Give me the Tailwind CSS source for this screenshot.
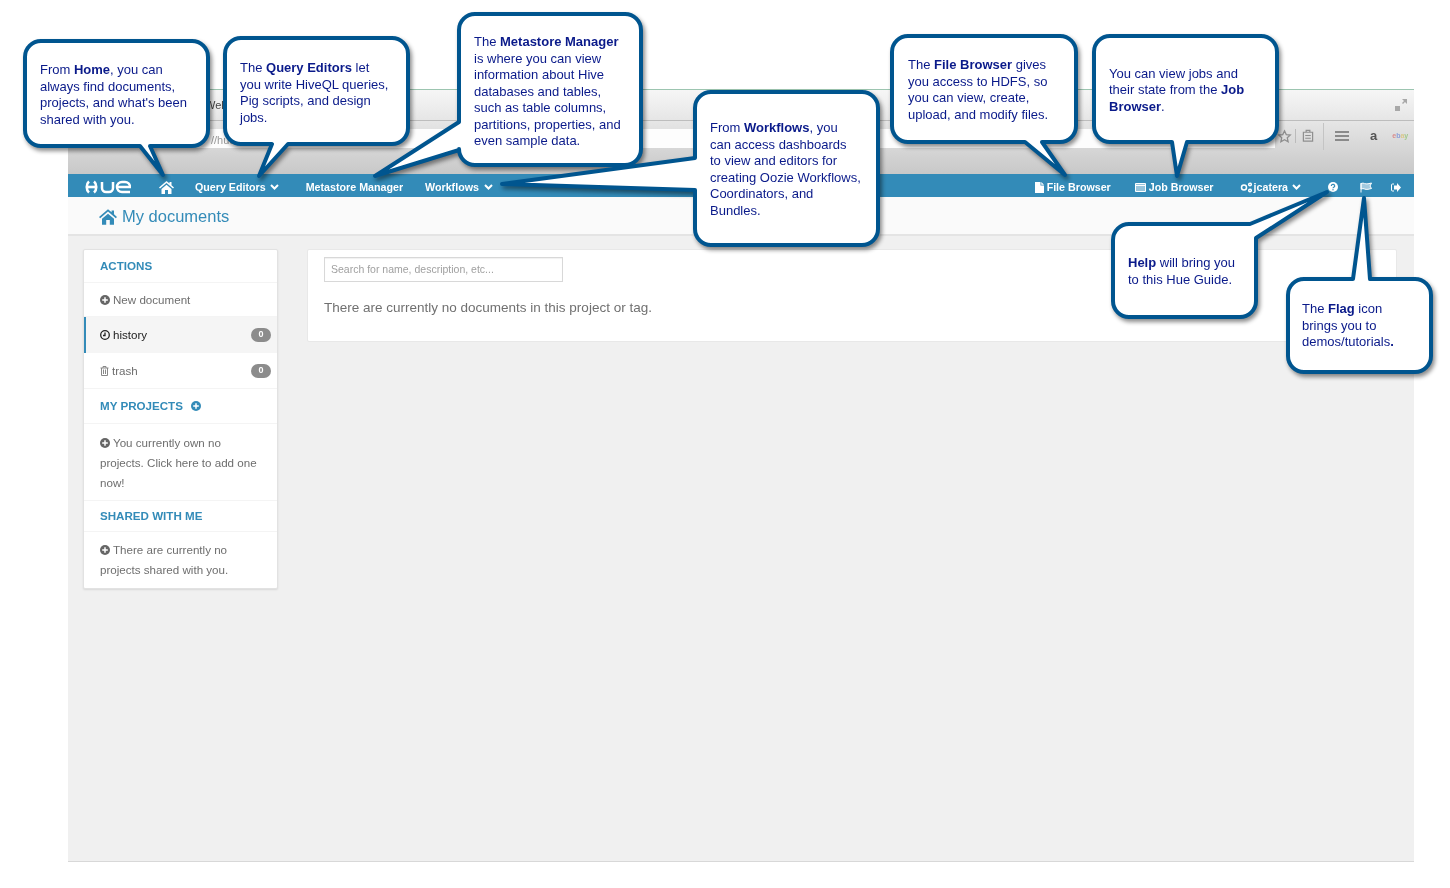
<!DOCTYPE html>
<html lang="en">
<head>
    <meta charset="UTF-8">
    <meta name="viewport" content="width=device-width, initial-scale=1.0">
    <title>Hue - My documents</title>
    <script src="https://cdn.jsdelivr.net/npm/@tailwindcss/browser@4"></script>
</head>
<body class="bg-white font-['Liberation_Sans',Arial,sans-serif] overflow-hidden">
<div class="relative w-[1450px] h-[888px] pt-[89px] pl-[68px]">

    <!-- the Hue window -->
    <div class="w-[1346px] h-[773px] flex flex-col bg-[#f0f0f0] border-b border-[#d8d8d8] blur-[0.5px]">
        <!-- browser chrome behind the callouts -->
        <div class="h-[85px] flex flex-col border-t border-[#9cc5b0]">
            <div class="h-[31px] flex items-center justify-end pr-[6px] bg-gradient-to-b from-[#f6f6f6] to-[#e6e6e6] border-b border-[#bdbdbd]">
                <span class="mr-auto ml-[137px] text-[11px] text-[#444]">Welc</span>
                <svg class="w-[14px] h-[14px] text-[#a8a8a8]" viewBox="0 0 14 14" fill="currentColor"><path d="M8 1h5v5l-2-2-2 2-1-1 2-2zM1 8h5v5H1z"/></svg>
            </div>
            <div class="flex-1 flex items-start pt-[8px] bg-gradient-to-b from-[#e6e6e6] to-[#c8c8c8] text-[#8f8f8f]">
                <div class="ml-[62px] w-[1145px] h-[19px] bg-[#fdfdfd] flex items-center pt-[3px] pl-[81px] text-[11px] text-[#999]">//hue</div>
                <svg class="ml-[2px] w-[15px] h-[15px]" viewBox="0 0 24 24" fill="none" stroke="currentColor" stroke-width="2"><path d="M12 3l2.800 6 6.400.7-4.800 4.300 1.400 6.500L12 17l-5.800 3.500L7.600 14 2.800 9.700 9.200 9z"/></svg>
                <div class="ml-[3px] w-px h-[14px] bg-[#bbb]"></div>
                <svg class="ml-[6px] w-[12px] h-[13px]" viewBox="0 0 13 14" fill="none" stroke="currentColor" stroke-width="1.300"><path d="M1.500 3.500h10v9.500h-10zM4.500 3.500V1.500h4v2M3.500 7h6M3.500 10h6"/></svg>
                <div class="ml-[9px] w-px h-[27px] -mt-[6px] bg-[#c4c4c4]"></div>
                <div class="ml-[11px] mt-[2px] w-[14px] flex flex-col gap-[2px]"><div class="h-[2px] bg-[#8a8a8a]"></div><div class="h-[2px] bg-[#8a8a8a]"></div><div class="h-[2px] bg-[#8a8a8a]"></div></div>
                <span class="ml-[21px] text-[13px] font-bold text-[#555] leading-none">a</span>
                <span class="ml-[15px] mt-[3px] text-[7px] font-bold leading-none"><span class="text-[#d98c8c]">e</span><span class="text-[#8c9fd9]">b</span><span class="text-[#d9c98c]">a</span><span class="text-[#a3c98c]">y</span></span>
            </div>
        </div>

        <!-- navbar -->
        <nav class="h-[23px] pt-[3px] bg-[#338bb8] flex items-center text-white text-[10.700px] font-bold">
            <svg class="ml-[17px] w-[46px] h-[14px]" viewBox="0 0 46 14" fill="none" stroke="white" stroke-width="2.500"><path d="M4 1.500C1 4 1 10 4 12.500M9 1.500c3 2.500 3 8.500 0 11" stroke-width="2.600"/><path d="M2 7h9" stroke-width="2.600"/><path d="M17 2v6a4 4 0 0 0 4 4h3a4 4 0 0 0 4-4V2"/><path d="M45 12h-8a5 5 0 0 1 0-10h3a5 5 0 0 1 5 5H32"/></svg>
            <svg class="ml-[28px] w-[15px] h-[13px]" viewBox="0 0 15 13" fill="white"><path d="M7.500 0l3 2.600V1h2v3.300L15 6.500l-1 1-6.500-5.600L1 7.500l-1-1zM2.500 8l5-4.300 5 4.300v5H9V9H6v4H2.500z"/></svg>
            <span class="ml-[21px]">Query Editors</span>
            <svg class="ml-[4px] w-[9px] h-[6px]" viewBox="0 0 9 6" fill="none" stroke="white" stroke-width="2"><path d="M1 1l3.500 3.500L8 1"/></svg>
            <span class="ml-[27px]">Metastore Manager</span>
            <span class="ml-[22px]">Workflows</span>
            <svg class="ml-[5px] w-[9px] h-[6px]" viewBox="0 0 9 6" fill="none" stroke="white" stroke-width="2"><path d="M1 1l3.500 3.500L8 1"/></svg>
            <svg class="ml-auto w-[9px] h-[11px]" viewBox="0 0 9 11" fill="white"><path d="M0 0h5.500v3.500H9V11H0zM6.300 0L9 2.700H6.300z"/></svg>
            <span class="ml-[3px]">File Browser</span>
            <svg class="ml-[24px] w-[11px] h-[9px]" viewBox="0 0 11 9" fill="white" fill-opacity=".5" stroke="white"><path d="M.5.500h10v8H.500zM.5 2.500h10"/></svg>
            <span class="ml-[3px]">Job Browser</span>
            <svg class="ml-[26px] w-[12px] h-[11px]" viewBox="0 0 12 11" fill="none" stroke="white" stroke-width="1.500"><circle cx="4" cy="5.500" r="2.500"/><circle cx="10" cy="2.500" r="1.300"/><circle cx="10" cy="8.500" r="1.300"/></svg>
            <span class="ml-[2px]">jcatera</span>
            <svg class="ml-[4px] w-[9px] h-[6px]" viewBox="0 0 9 6" fill="none" stroke="white" stroke-width="2"><path d="M1 1l3.500 3.500L8 1"/></svg>
            <svg class="ml-[27px] w-[10px] h-[10px]" viewBox="0 0 10 10"><circle cx="5" cy="5" r="5" fill="white"/><path d="M3.300 3.900a1.700 1.500 0 1 1 2.500 1.300c-.6.300-.8.500-.8 1" fill="none" stroke="#338bb8" stroke-width="1.200"/><circle cx="5" cy="7.800" r=".7" fill="#338bb8"/></svg>
            <svg class="ml-[22px] w-[12px] h-[11px]" viewBox="0 0 12 11" fill="white" fill-opacity=".55" stroke="white"><path d="M1 1v9.500M1 1.500c3-1.200 4 1 7 .3l3.500-.8-1.500 3 1.500 2.500-3.500.8c-3 .7-4-1.500-7-.3z"/></svg>
            <svg class="ml-[19px] mr-[13px] w-[10px] h-[9px]" viewBox="0 0 10 9" fill="white"><path d="M6 0l4 4.500L6 9V6.500H3V2.500h3z"/><path d="M3 1H1.500a1 1 0 0 0-1 1v5a1 1 0 0 0 1 1H3" fill="none" stroke="white"/></svg>
        </nav>

        <!-- page title -->
        <div class="h-[39px] pt-[2px] bg-[#fafafa] border-b-2 border-[#e4e4e4] flex items-center pl-[31px] text-[#338bb8] text-[16.500px]">
            <svg class="w-[18px] h-[16px] mr-[5px]" viewBox="0 0 15 13" fill="#338bb8"><path d="M7.500 0l3 2.600V1h2v3.300L15 6.500l-1 1-6.500-5.600L1 7.500l-1-1zM2.500 8l5-4.300 5 4.300v5H9V9H6v4H2.500z"/></svg>
            <span>My documents</span>
        </div>

        <!-- sidebar and results -->
        <div class="flex items-start pt-[13px] pl-[15px] pr-[17px] gap-[29px]">
            <aside class="w-[195px] bg-white border border-[#e2e2e2] rounded-[2px] shadow-[0_1px_2px_rgba(0,0,0,0.1)] text-[11.600px] text-[#6e6e6e] shrink-0">
                <div class="h-[33px] flex items-center pl-[16px] font-bold text-[#338bb8] border-b border-[#f4f4f4]">ACTIONS</div>
                <div class="h-[34px] flex items-center pl-[16px] border-b border-[#f4f4f4]">
                    <svg class="w-[10px] h-[10px] mr-[3px]" viewBox="0 0 10 10"><circle cx="5" cy="5" r="5" fill="#666"/><path d="M5 2.200v5.600M2.200 5h5.600" stroke="white" stroke-width="1.500"/></svg>New document
                </div>
                <div class="h-[36px] flex items-center pl-[14px] pr-[6px] bg-[#f5f5f5] border-l-2 border-[#338bb8] text-[#222]">
                    <svg class="w-[10px] h-[10px] mr-[3px]" viewBox="0 0 10 10" fill="none" stroke="#222" stroke-width="1.300"><circle cx="5" cy="5" r="4.300"/><path d="M5 2.500V5.500H3"/></svg>history
                    <span class="ml-auto w-[20px] h-[14px] rounded-full bg-[#8c8c8c] text-white text-[9px] font-bold flex items-center justify-center">0</span>
                </div>
                <div class="h-[36px] flex items-center pl-[16px] pr-[6px] border-b border-[#f4f4f4]">
                    <svg class="w-[9px] h-[10px] mr-[3px]" viewBox="0 0 9 10" fill="none" stroke="#888"><path d="M.5 2h8M3 2V.5h3V2M1.500 2v7.500h6V2M3.500 3.500v4.500M5.500 3.500v4.500"/></svg>trash
                    <span class="ml-auto w-[20px] h-[14px] rounded-full bg-[#8c8c8c] text-white text-[9px] font-bold flex items-center justify-center">0</span>
                </div>
                <div class="h-[35px] flex items-center pl-[16px] font-bold text-[#338bb8] border-b border-[#f4f4f4]">
                    MY PROJECTS
                    <svg class="w-[10px] h-[10px] ml-[8px]" viewBox="0 0 10 10"><circle cx="5" cy="5" r="5" fill="#338bb8"/><path d="M5 2.200v5.600M2.200 5h5.600" stroke="white" stroke-width="1.500"/></svg>
                </div>
                <p class="px-[16px] pt-[9px] pb-[7px] leading-[20px] border-b border-[#f4f4f4]">
                    <svg class="inline w-[10px] h-[10px] mr-[3px] align-[-1px]" viewBox="0 0 10 10"><circle cx="5" cy="5" r="5" fill="#666"/><path d="M5 2.200v5.600M2.200 5h5.600" stroke="white" stroke-width="1.500"/></svg>You currently own no projects. Click here to add one now!
                </p>
                <div class="h-[31px] flex items-center pl-[16px] font-bold text-[#338bb8] border-b border-[#f4f4f4]">SHARED WITH ME</div>
                <p class="px-[16px] pt-[8px] pb-[8px] leading-[20px]">
                    <svg class="inline w-[10px] h-[10px] mr-[3px] align-[-1px]" viewBox="0 0 10 10"><circle cx="5" cy="5" r="5" fill="#666"/><path d="M5 2.200v5.600M2.200 5h5.600" stroke="white" stroke-width="1.500"/></svg>There are currently no projects shared with you.
                </p>
            </aside>
            <main class="flex-1 h-[93px] bg-white border border-[#e8e8e8] rounded-[2px] pl-[16px] pt-[7px]">
                <div class="w-[239px] h-[25px] border border-[#d8d8d8] shadow-[inset_0_1px_1px_rgba(0,0,0,0.06)] flex items-center pl-[6px] text-[10.500px] text-[#a0a0a0]">Search for name, description, etc...</div>
                <p class="mt-[16px] text-[13.500px] text-[#707070]">There are currently no documents in this project or tag.</p>
            </main>
        </div>
    </div>

    <!-- callout shapes, lying over the screenshot -->
    <svg class="absolute left-0 top-0 drop-shadow-[2px_3px_2px_rgba(0,0,0,0.45)]" width="1450" height="888" fill="white" stroke="#00558f" stroke-width="4" stroke-linejoin="round">
        <path d="M41 41H192a16 16 0 0 1 16 16V130a16 16 0 0 1-16 16H150L163 175L140 146H41a16 16 0 0 1-16-16V57a16 16 0 0 1 16-16z"/>
        <path d="M241 38H392a16 16 0 0 1 16 16V128a16 16 0 0 1-16 16H288L259 176L272 144H241a16 16 0 0 1-16-16V54a16 16 0 0 1 16-16z"/>
        <path d="M475 14H625a16 16 0 0 1 16 16V149a16 16 0 0 1-16 16H475a16 16 0 0 1-16-16V150L375 176L459 122V30a16 16 0 0 1 16-16z"/>
        <path d="M711 92H862a16 16 0 0 1 16 16V229a16 16 0 0 1-16 16H711a16 16 0 0 1-16-16V190L502 184L695 158V108a16 16 0 0 1 16-16z"/>
        <path d="M908 36H1060a16 16 0 0 1 16 16V126a16 16 0 0 1-16 16H1042L1065 175L1025 142H908a16 16 0 0 1-16-16V52a16 16 0 0 1 16-16z"/>
        <path d="M1110 36H1261a16 16 0 0 1 16 16V126a16 16 0 0 1-16 16H1187L1177 176L1172 142H1110a16 16 0 0 1-16-16V52a16 16 0 0 1 16-16z"/>
        <path d="M1129 224H1250L1327 192L1256 238V301a16 16 0 0 1-16 16H1129a16 16 0 0 1-16-16V240a16 16 0 0 1 16-16z"/>
        <path d="M1304 279H1353L1364 198L1370 279H1415a16 16 0 0 1 16 16V356a16 16 0 0 1-16 16H1304a16 16 0 0 1-16-16V295a16 16 0 0 1 16-16z"/>
    </svg>

    <!-- callout texts -->
    <p class="absolute left-[40px] top-[62px] whitespace-nowrap text-[13px] leading-[16.500px] text-[#0a1a8a] blur-[0.3px]">From <b>Home</b>, you can<br>always find documents,<br>projects, and what's been<br>shared with you.</p>
    <p class="absolute left-[240px] top-[60px] whitespace-nowrap text-[13px] leading-[16.500px] text-[#0a1a8a] blur-[0.3px]">The <b>Query Editors</b> let<br>you write HiveQL queries,<br>Pig scripts, and design<br>jobs.</p>
    <p class="absolute left-[474px] top-[34px] whitespace-nowrap text-[13px] leading-[16.500px] text-[#0a1a8a] blur-[0.3px]">The <b>Metastore Manager</b><br>is where you can view<br>information about Hive<br>databases and tables,<br>such as table columns,<br>partitions, properties, and<br>even sample data.</p>
    <p class="absolute left-[710px] top-[120px] whitespace-nowrap text-[13px] leading-[16.500px] text-[#0a1a8a] blur-[0.3px]">From <b>Workflows</b>, you<br>can access dashboards<br>to view and editors for<br>creating Oozie Workflows,<br>Coordinators, and<br>Bundles.</p>
    <p class="absolute left-[908px] top-[57px] whitespace-nowrap text-[13px] leading-[16.500px] text-[#0a1a8a] blur-[0.3px]">The <b>File Browser</b> gives<br>you access to HDFS, so<br>you can view, create,<br>upload, and modify files.</p>
    <p class="absolute left-[1109px] top-[65.500px] whitespace-nowrap text-[13px] leading-[16.500px] text-[#0a1a8a] blur-[0.3px]">You can view jobs and<br>their state from the <b>Job</b><br><b>Browser</b>.</p>
    <p class="absolute left-[1128px] top-[255px] whitespace-nowrap text-[13px] leading-[16.500px] text-[#0a1a8a] blur-[0.3px]"><b>Help</b> will bring you<br>to this Hue Guide.</p>
    <p class="absolute left-[1302px] top-[301px] whitespace-nowrap text-[13px] leading-[16.500px] text-[#0a1a8a] blur-[0.3px]">The <b>Flag</b> icon<br>brings you to<br>demos/tutorials<b>.</b></p>
</div>
</body>
</html>
